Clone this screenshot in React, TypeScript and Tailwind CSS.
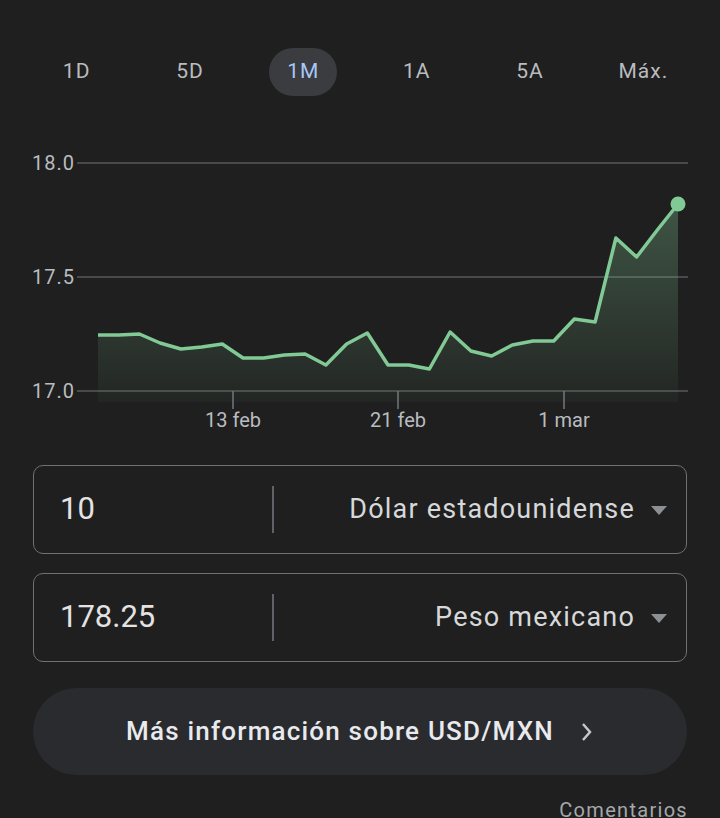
import React from "react";

// Tipo de cambio USD/MXN — vista de 1 mes
const RANGES = ["1D", "5D", "1M", "1A", "5A", "Máx."];
const ACTIVE = "1M";

// y en coordenadas de página (18.0 = 163, 17.0 = 391)
const SERIES = [
  335, 335, 334, 343, 349, 347, 344, 358, 358, 355, 354, 365, 344, 333, 365,
  365, 369, 332, 351, 356, 345, 341, 341, 319, 322, 238, 257, 230, 204,
];
const X0 = 98;
const X1 = 678;

const FONT = { fontFamily: "Roboto, 'Open Sans', Arial, sans-serif" };

const RangeTabs = () => (
  <div className="grid grid-cols-6 px-[20px] h-[48px]">
    {RANGES.map((r) => (
      <div key={r} className="flex items-center justify-center">
        <button
          className={`h-[48px] px-[18px] rounded-full text-[21px] tracking-[1px] ${
            r === ACTIVE ? "bg-[#3a3c40] text-[#a8c7fa]" : "text-[#b9bcbf]"
          }`}
        >
          {r}
        </button>
      </div>
    ))}
  </div>
);

const Chart = () => {
  const step = (X1 - X0) / (SERIES.length - 1);
  const pts = SERIES.map((y, i) => [X0 + i * step, y] as const);
  const line = pts.map(([x, y], i) => `${i ? "L" : "M"}${x.toFixed(1)} ${y}`).join(" ");
  const area = `${line} L${X1} 402 L${X0} 402 Z`;
  const grid = [
    { y: 163, label: "18.0" },
    { y: 277, label: "17.5" },
    { y: 391, label: "17.0" },
  ];
  const ticks = [
    { x: 233, label: "13 feb" },
    { x: 398, label: "21 feb" },
    { x: 564, label: "1 mar" },
  ];

  return (
    <svg viewBox="0 96 720 349" width={720} height={349} className="block">
      <defs>
        <linearGradient id="fx-fill" x1="0" y1="0" x2="0" y2="1">
          <stop offset="0%" stopColor="#81c995" stopOpacity="0.32" />
          <stop offset="100%" stopColor="#81c995" stopOpacity="0.04" />
        </linearGradient>
      </defs>
      {grid.map((g) => (
        <g key={g.y}>
          <line x1={77} x2={688} y1={g.y} y2={g.y} stroke="#56595d" strokeWidth={1.5} />
          <text x={32} y={g.y + 7} fontSize={20} letterSpacing={1} fill="#b9bcbf" style={FONT}>
            {g.label}
          </text>
        </g>
      ))}
      <path d={area} fill="url(#fx-fill)" />
      {ticks.map((t) => (
        <g key={t.x}>
          <line x1={t.x} x2={t.x} y1={391} y2={409} stroke="#75787c" strokeWidth={1.5} />
          <text x={t.x} y={427} fontSize={20} fill="#b9bcbf" textAnchor="middle" style={FONT}>
            {t.label}
          </text>
        </g>
      ))}
      <path d={line} fill="none" stroke="#81c995" strokeWidth={3.5} strokeLinejoin="round" />
      <circle cx={X1} cy={204} r={7.5} fill="#81c995" />
    </svg>
  );
};

const CurrencyField = ({ amount, currency }: { amount: string; currency: string }) => (
  <div className="flex items-center h-[89px] rounded-[10px] border-[1.5px] border-[#6d7074]">
    <div className="w-[238px] pl-[26px] text-[31px] text-[#e3e3e3]">{amount}</div>
    <div className="w-[1.5px] h-[47px] bg-[#5f6266]" />
    <div className="flex-1 flex items-center justify-end pr-[19px]">
      <span className="text-[27px] tracking-[1.2px] text-[#d6d8da]">{currency}</span>
      <svg width={16} height={9} viewBox="0 0 16 9" className="ml-[16px] mt-[2px]">
        <path d="M0 0 L16 0 L8 9 Z" fill="#8d9093" />
      </svg>
    </div>
  </div>
);

export default function App() {
  return (
    <div className="w-[720px] h-[818px] overflow-hidden bg-[#1f1f1f]" style={FONT}>
      <div className="pt-[48px]">
        <RangeTabs />
      </div>
      <Chart />
      <div className="px-[33px] mt-[20px] flex flex-col gap-[19px]">
        <CurrencyField amount="10" currency="Dólar estadounidense" />
        <CurrencyField amount="178.25" currency="Peso mexicano" />
      </div>
      <div className="px-[33px] mt-[26px]">
        <button className="w-full h-[87px] rounded-full bg-[#2a2b2e] flex items-center justify-center">
          <span className="text-[26px] font-medium tracking-[1.2px] text-[#e8eaed]">Más información sobre USD/MXN</span>
          <svg width={14} height={22} viewBox="0 0 14 22" className="ml-[26px]">
            <path d="M3 3 L10 11 L3 19" fill="none" stroke="#c4c7c5" strokeWidth={2.5} />
          </svg>
        </button>
      </div>
      <div className="flex justify-end pr-[32px] mt-[20px]">
        <span className="text-[20px] tracking-[1.3px] text-[#a5a8ab]">Comentarios</span>
      </div>
    </div>
  );
}
